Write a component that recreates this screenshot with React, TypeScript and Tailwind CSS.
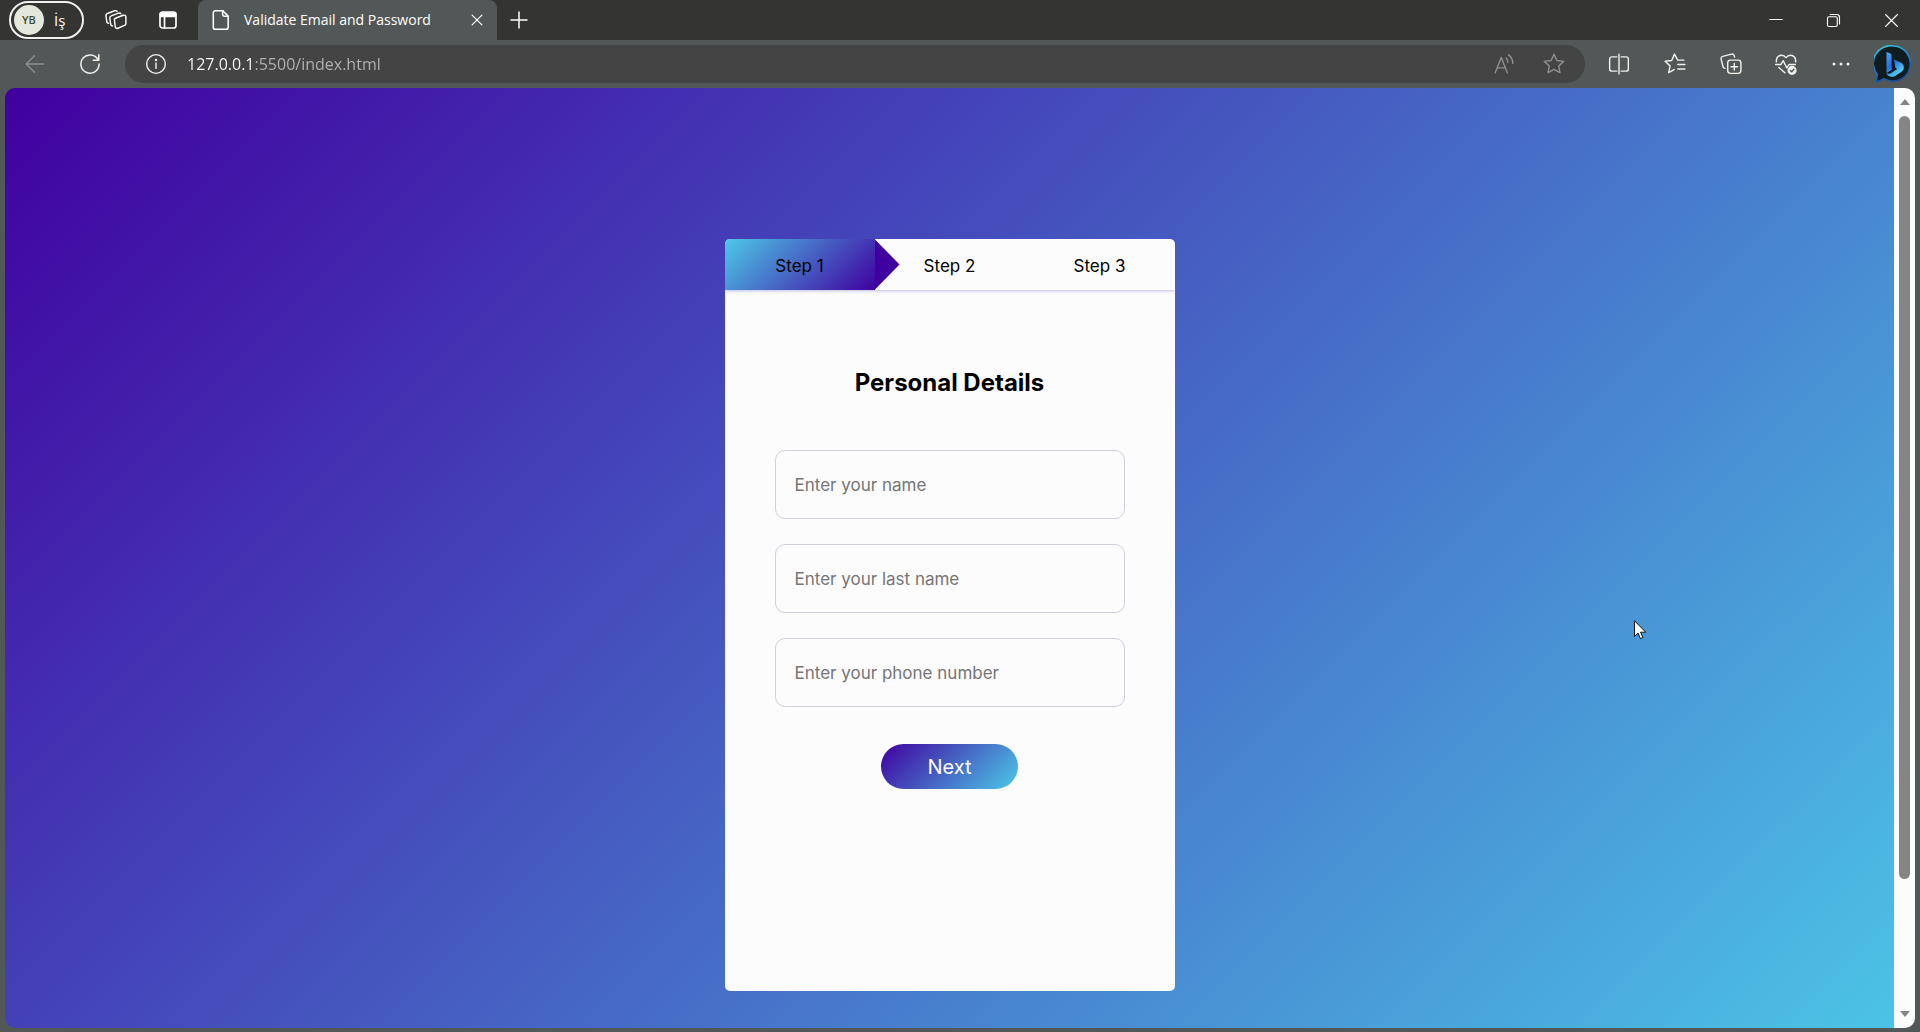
import type { ReactNode } from "react";

type IconButtonProps = { label: string; className?: string; children: ReactNode };

function IconButton({ label, className = "w-12", children }: IconButtonProps) {
  return (
    <button type="button" aria-label={label} className={`flex h-9 shrink-0 items-center justify-center ${className}`}>
      {children}
    </button>
  );
}

function Icon({ children, size = 20, stroke = 1.3 }: { children: ReactNode; size?: number; stroke?: number }) {
  return (
    <svg
      width={size}
      height={size}
      viewBox="0 0 20 20"
      fill="none"
      stroke="currentColor"
      strokeWidth={stroke}
      strokeLinecap="round"
      strokeLinejoin="round"
      aria-hidden="true"
    >
      {children}
    </svg>
  );
}

const STAR = "M10 1.2l2.6 5.6 6.2.8-4.5 4.2 1.1 6.1-5.4-3-5.4 3 1.1-6.1-4.5-4.2 6.2-.8z";

function BingLogo() {
  return (
    <svg width="38" height="38" viewBox="0 0 38 38" aria-hidden="true">
      <defs>
        <linearGradient id="bing-ring" x1="0.2" y1="0" x2="0.6" y2="1">
          <stop offset="0" stopColor="#35c8e0" />
          <stop offset="0.7" stopColor="#1f5fc0" />
          <stop offset="1" stopColor="#1a4a9a" />
        </linearGradient>
        <linearGradient id="bing-b" x1="0" y1="0" x2="0.6" y2="1">
          <stop offset="0" stopColor="#4aa8f0" />
          <stop offset="0.5" stopColor="#2470e0" />
          <stop offset="1" stopColor="#56dcf4" />
        </linearGradient>
      </defs>
      <path
        d="M19.500 1a17.500 17.500 0 1 1-9.500 32.600C7.500 35.500 4.500 36.500 1.500 36.500c1.200-2.500 1.800-4.500 1.800-7A17.500 17.500 0 0 1 19.500 1z"
        fill="#111c20"
        stroke="url(#bing-ring)"
        strokeWidth="1.600"
      />
      <path
        d="M12.500 7l3.500 1.300c1 .4 1.600 1.300 1.600 2.300v14.200l-5.100 3.200zM20 14.500l7 3.300c3.500 2 3.700 6.500.9 8.800L20.500 31.200c-3 1.500-7.500.3-8-3.200 1.500 1.200 3.600 1 5-.2l5.700-3.800-1.900-1.500z"
        fill="url(#bing-b)"
      />
    </svg>
  );
}

function TabStrip() {
  return (
    <header className="flex h-10 items-center bg-[#343432] text-white">
      <button
        type="button"
        className="ml-[9px] flex h-[38px] w-[75px] shrink-0 items-center gap-[10px] rounded-full border-2 border-[#f0f0f0] pl-[3px] text-[15px]"
      >
        <span className="flex size-[30px] items-center justify-center rounded-full bg-[#e4e8dc] text-[11px] font-semibold text-[#3a4a32]">
          YB
        </span>
        <span>İş</span>
      </button>
      <IconButton label="Workspaces" className="ml-[14px] w-9">
        <Icon size={22}>
          <path d="M10 8.200l6.600-2.500c1.200-.4 2.400.3 2.400 1.600v5.800c0 .9-.5 1.500-1.300 1.800l-6 2.600c-1.200.5-2.200-.2-2.400-1.400L8.600 10.400c-.2-1 .4-1.900 1.400-2.200z" />
          <path d="M6.800 15.500c-.9 0-1.400-.6-1.600-1.400L4.400 8.400c-.2-1 .4-1.900 1.300-2.200l6.600-2.500c1-.3 1.800 0 2.200.6" />
          <path d="M3.200 13c-.9 0-1.400-.6-1.600-1.400L.9 6.300c-.2-1 .4-1.900 1.300-2.200l6.600-2.500c1-.3 1.800 0 2.200.6" />
        </Icon>
      </IconButton>
      <IconButton label="Tab actions" className="ml-4 w-9">
        <Icon stroke={1.700}>
          <rect x="2" y="2" width="16" height="16" rx="2.500" />
          <path d="M2.500 3h15v3.500h-15z" fill="currentColor" />
          <path d="M6.500 7v11" />
        </Icon>
      </IconButton>
      <div className="ml-3 flex h-10 w-[299px] items-center rounded-t-lg bg-[#525857] pl-3">
        <Icon size={22} stroke={1.400}>
          <path d="M5 1.500h6.500l5 5v10a2 2 0 0 1-2 2H5a2 2 0 0 1-2-2v-13a2 2 0 0 1 2-2z" />
          <path d="M11.500 1.500v3.500a1.500 1.500 0 0 0 1.500 1.500h3.500" />
        </Icon>
        <span className="ml-3 flex-1 text-sm whitespace-nowrap">Validate Email and Password</span>
        <IconButton label="Close tab" className="w-10">
          <Icon size={14} stroke={1.700}>
            <path d="M3 3l14 14M17 3L3 17" />
          </Icon>
        </IconButton>
      </div>
      <IconButton label="New tab" className="w-11">
        <Icon stroke={1.500}>
          <path d="M10 2v16M2 10h16" />
        </Icon>
      </IconButton>
      <div className="ml-auto flex">
        <IconButton label="Minimize" className="w-14">
          <Icon size={14} stroke={1.500}>
            <path d="M1 9.300h18" />
          </Icon>
        </IconButton>
        <IconButton label="Restore" className="w-[58px]">
          <Icon size={15} stroke={1.500}>
            <rect x="2" y="5" width="13" height="13" rx="2" />
            <path d="M5.500 2h9a3.500 3.500 0 0 1 3.500 3.500v9" />
          </Icon>
        </IconButton>
        <IconButton label="Close" className="w-[58px]">
          <Icon size={15} stroke={1.500}>
            <path d="M2 2l16 16M18 2L2 18" />
          </Icon>
        </IconButton>
      </div>
    </header>
  );
}

function Toolbar() {
  return (
    <nav aria-label="Browser toolbar" className="flex h-12 items-center bg-[#525857] text-[#f0f0ec]">
      <IconButton label="Back" className="ml-2 w-[54px] text-[#8d918f]">
        <Icon size={22} stroke={1.200}>
          <path d="M18 10H2M9.500 2.500L2 10l7.500 7.500" />
        </Icon>
      </IconButton>
      <IconButton label="Refresh" className="w-14">
        <Icon size={22} stroke={1.400}>
          <path d="M17.500 6.500A8.300 8.300 0 1 0 18.300 10M18 1.500v5h-5" />
        </Icon>
      </IconButton>
      <div className="ml-[7px] flex h-[38px] flex-1 items-center rounded-full bg-[#434443]">
        <IconButton label="Site information" className="w-[62px]">
          <Icon size={22}>
            <circle cx="10" cy="10" r="8.500" />
            <path d="M10 9v5" />
            <circle cx="10" cy="6.300" r="0.500" fill="currentColor" />
          </Icon>
        </IconButton>
        <input
          type="text"
          aria-label="Address"
          defaultValue="127.0.0.1:5500/index.html"
          className="min-w-0 flex-1 bg-[linear-gradient(90deg,#ffffff_67px,#b4b4b2_67px)] bg-clip-text text-base text-transparent outline-none"
        />
        <IconButton label="Read aloud" className="w-[50px] text-[#8f8f8c]">
          <Icon size={22}>
            <path d="M2 18L7.500 4 13 18M4 13.500h7M12 4.500c1 1.200 1.500 2.500 1.500 4M14 1.500c2.500 2 4 5 4 8" />
          </Icon>
        </IconButton>
        <IconButton label="Add to favorites" className="mr-[6px] w-[50px] text-[#8f8f8c]">
          <Icon size={22}>
            <path d={STAR} />
          </Icon>
        </IconButton>
      </div>
      <IconButton label="Split screen" className="ml-[6px] w-14">
        <Icon size={22}>
          <path d="M8 3.500H3.500a2 2 0 0 0-2 2v9a2 2 0 0 0 2 2H8M12 3.500h4.500a2 2 0 0 1 2 2v9a2 2 0 0 1-2 2H12M10 1v18" />
        </Icon>
      </IconButton>
      <IconButton label="Favorites" className="w-14">
        <Icon size={22}>
          <path d="M18 6.500h-5.500L9.500 1 7 6.800l-6 .7 4.500 4.200-1.200 6.200 4.900-2.800M12.500 10.500H19M12.500 14.500H19" />
        </Icon>
      </IconButton>
      <IconButton label="Collections" className="w-[55px]">
        <Icon size={22}>
          <rect x="7" y="6.500" width="12" height="12" rx="2.500" />
          <path d="M13 9.500v6M10 12.500h6M4.500 14c-1-.2-1.600-.8-1.800-1.700L1 5.500c-.2-1.200.4-2.100 1.500-2.400l8-2.100c1.200-.3 2 .3 2.400 1.400l.3 1.200" />
        </Icon>
      </IconButton>
      <IconButton label="Browser essentials" className="w-[55px]">
        <Icon size={22}>
          <path d="M1.300 8C.8 5 2.800 2 5.800 2 7.500 2 9 2.800 10 4.200 11 2.800 12.500 2 14.200 2c3 0 5 3 4.500 6M.5 10.500h4.800L7.500 7l3.200 6.500 2-3h5.800M3.500 13.200L9 18" />
          <circle cx="15.500" cy="15.800" r="3.500" fill="currentColor" />
          <path d="M14 16l1.200 1.100 2-2.300" stroke="#525857" />
        </Icon>
      </IconButton>
      <IconButton label="Settings and more" className="w-[55px]">
        <Icon size={20}>
          <g fill="currentColor" stroke="none">
            <circle cx="3" cy="10" r="1.500" />
            <circle cx="10" cy="10" r="1.500" />
            <circle cx="17" cy="10" r="1.500" />
          </g>
        </Icon>
      </IconButton>
      <IconButton label="Bing" className="mr-[2px] w-[50px]">
        <BingLogo />
      </IconButton>
    </nav>
  );
}

const FIELDS = [
  { id: "first-name", placeholder: "Enter your name", type: "text" },
  { id: "last-name", placeholder: "Enter your last name", type: "text" },
  { id: "phone", placeholder: "Enter your phone number", type: "tel" },
];

function FormCard() {
  return (
    <main className="min-h-[752px] w-[450px] max-w-full overflow-hidden rounded-[5px] bg-[#fcfcfd] font-[Inter,sans-serif] text-black">
      <ol className="flex h-[51px] text-[17px] shadow-[0_1px_3px_rgba(80,70,190,0.35)]">
        <li className="relative flex flex-1 items-center justify-center bg-linear-[135deg,#4cc9e8,#4000a0] pt-1">
          Step 1
          <span className="absolute top-0 left-full h-full w-[25px] bg-[#4000a0] [clip-path:polygon(0_0,100%_50%,0_100%)]" />
        </li>
        <li className="flex flex-1 items-center justify-center pt-1">Step 2</li>
        <li className="flex flex-1 items-center justify-center pt-1">Step 3</li>
      </ol>
      <form className="flex flex-col items-center px-[50px]" onSubmit={(event) => event.preventDefault()}>
        <h1 className="mt-[75px] text-2xl leading-9 font-bold">Personal Details</h1>
        <div className="mt-[49px] flex w-full flex-col gap-[25px]">
          {FIELDS.map((field) => (
            <input
              key={field.id}
              id={field.id}
              name={field.id}
              type={field.type}
              aria-label={field.placeholder}
              placeholder={field.placeholder}
              className="block h-[69px] w-full rounded-[10px] border border-[#cfcfe0] bg-transparent px-[19px] text-[17px] outline-none placeholder:text-[#757575]"
            />
          ))}
        </div>
        <button
          type="submit"
          className="mt-[37px] h-[45px] w-[137px] rounded-full bg-linear-[135deg,#4000a0,#4cc9e8] text-xl text-white"
        >
          Next
        </button>
      </form>
    </main>
  );
}

function Scrollbar() {
  return (
    <div className="flex w-[21px] flex-col items-center bg-[#fcfcfc] py-[11px]">
      <svg width="10" height="6" viewBox="0 0 10 6" aria-hidden="true">
        <path d="M0 6l5-6 5 6z" fill="#858585" />
      </svg>
      <div className="mt-[11px] w-[11px] grow-[762] basis-0 rounded-full bg-[#858585]" />
      <div className="grow-[132] basis-0" />
      <svg width="10" height="6" viewBox="0 0 10 6" aria-hidden="true">
        <path d="M0 0l5 6 5-6z" fill="#858585" />
      </svg>
    </div>
  );
}

export default function App() {
  return (
    <div className="flex min-h-screen flex-col bg-[#525857] font-['Open_Sans',sans-serif]">
      <TabStrip />
      <Toolbar />
      <div className="mx-[5px] mb-1 flex flex-1 overflow-hidden rounded-[10px]">
        <div className="flex flex-1 justify-center bg-linear-[135deg,#4000a0,#4cc9e8_103%] pt-[151px] pb-[37px]">
          <FormCard />
        </div>
        <Scrollbar />
      </div>
      <svg className="absolute top-[620px] left-[1634px]" width="13" height="20" viewBox="0 0 13 20" aria-hidden="true">
        <path d="M.5.800v15.700l3.600-3.400 2.300 5.500 2.500-1-2.300-5.400h5.200z" fill="#fff" stroke="#111" />
      </svg>
    </div>
  );
}
